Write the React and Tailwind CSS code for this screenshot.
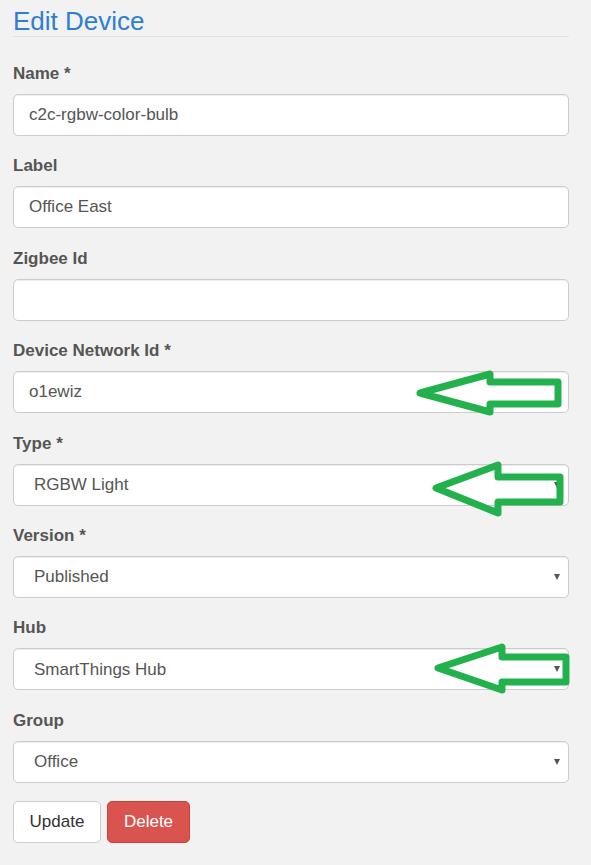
import React from 'react';

const fields = [
  { label: 'Name *', value: 'c2c-rgbw-color-bulb', kind: 'input' },
  { label: 'Label', value: 'Office East', kind: 'input' },
  { label: 'Zigbee Id', value: '', kind: 'input' },
  { label: 'Device Network Id *', value: 'o1ewiz', kind: 'input' },
  { label: 'Type *', value: 'RGBW Light', kind: 'select' },
  { label: 'Version *', value: 'Published', kind: 'select' },
  { label: 'Hub', value: 'SmartThings Hub', kind: 'select' },
  { label: 'Group', value: 'Office', kind: 'select' },
];

// hand-drawn annotation arrows (points in page px)
const arrows = [
  '420,393 490,374 490,382 558,382 558,404 490,404 490,412',
  '436,488 498,465 498,477 560,477 560,502 498,502 498,513',
  '438,668 502,647 502,657 566,657 566,682 502,682 502,690',
];

const Field = ({ label, value, kind }) => (
  <div className="mb-[18.4px]">
    <label className="block h-[24px] leading-[24px] mb-[8px] text-[17px] font-bold text-[#555]">{label}</label>
    {kind === 'input' ? (
      <input
        type="text"
        defaultValue={value}
        className="block w-full h-[42px] px-[15px] rounded-[5px] border border-[#ccc] bg-white text-[17px] text-[#555] shadow-[inset_0_1px_1px_rgba(0,0,0,0.075)] outline-none"
      />
    ) : (
      <div className="relative">
        <select
          defaultValue={value}
          className="block w-full h-[42px] pl-[20px] pr-[30px] rounded-[5px] border border-[#ccc] bg-white text-[17px] text-[#555] shadow-[inset_0_1px_1px_rgba(0,0,0,0.075)] outline-none appearance-none"
        >
          <option>{value}</option>
        </select>
        <span className="absolute right-[9px] top-1/2 -translate-y-1/2 w-0 h-0 border-l-[3.5px] border-r-[3.5px] border-t-[6px] border-l-transparent border-r-transparent border-t-[#555] pointer-events-none"></span>
      </div>
    )}
  </div>
);

export default function App() {
  return (
    <div className="relative min-h-[865px] w-[591px] bg-[#f2f2f2] font-['Liberation_Sans',Arial,sans-serif] text-[#555]">
      <div className="w-[556px] ml-[13px] pt-[6px]">
        <div className="border-b border-[#e2e2e2] mb-[25px]">
          <h3 className="text-[26px] leading-[30px] text-[#2d7fd3]">Edit Device</h3>
        </div>

        {fields.map((f) => (
          <Field key={f.label} {...f} />
        ))}

        <div className="flex gap-[6px]">
          <button className="h-[42px] w-[88px] rounded-[5px] border border-[#ccc] bg-white text-[17px] text-[#333]">Update</button>
          <button className="h-[42px] w-[83px] rounded-[5px] border border-[#d43f3a] bg-[#d9534f] text-[17px] text-white">Delete</button>
        </div>
      </div>

      <svg className="absolute inset-0 pointer-events-none" width="591" height="865">
        {arrows.map((p) => (
          <polygon key={p} points={p} fill="none" stroke="#22b14c" strokeWidth="7" strokeLinejoin="round" />
        ))}
      </svg>
    </div>
  );
}
